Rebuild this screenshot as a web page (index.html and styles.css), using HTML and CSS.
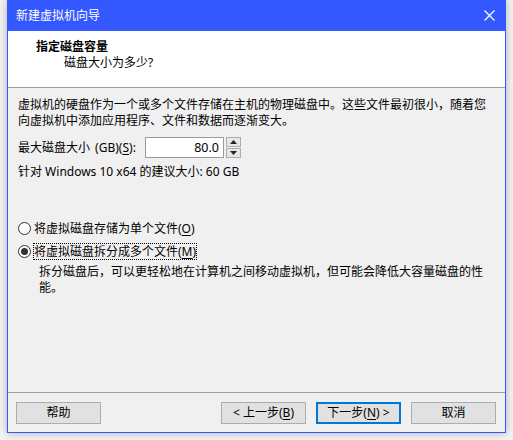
FILE: index.html
```html
<!DOCTYPE html>
<html lang="zh">
<head>
<meta charset="utf-8">
<title>新建虚拟机向导</title>
<link rel="stylesheet" href="styles.css">
</head>
<body>
<div class="window">
  <div class="titlebar">
    <span class="title">新建虚拟机向导</span>
    <svg class="close" width="11" height="11" viewBox="0 0 11 11"><path d="M0.5 0.5 L10.5 10.5 M10.5 0.5 L0.5 10.5" stroke="#fff" stroke-width="1.2" fill="none"/></svg>
  </div>
  <div class="header">
    <div class="h-title">指定磁盘容量</div>
    <div class="h-sub">磁盘大小为多少?</div>
  </div>
  <div class="content">
    <p class="para">虚拟机的硬盘作为一个或多个文件存储在主机的物理磁盘中。这些文件最初很小，随着您向虚拟机中添加应用程序、文件和数据而逐渐变大。</p>
    <div class="size-row">
      <span class="lbl">最大磁盘大小 (GB)(<u>S</u>):</span>
      <div class="spin">
        <div class="spin-input">80.0</div>
        <div class="spin-btns">
          <div class="sb"><svg width="7" height="4" viewBox="0 0 7 4"><path d="M3.5 0 L7 4 L0 4 Z" fill="#222"/></svg></div>
          <div class="sb"><svg width="7" height="4" viewBox="0 0 7 4"><path d="M0 0 L7 0 L3.5 4 Z" fill="#222"/></svg></div>
        </div>
      </div>
    </div>
    <div class="rec">针对 Windows 10 x64 的建议大小: 60 GB</div>
    <div class="radios">
      <div class="radio-row"><span class="radio"></span><span class="rlabel">将虚拟磁盘存储为单个文件(<u>O</u>)</span></div>
      <div class="radio-row"><span class="radio on"></span><span class="rlabel focus">将虚拟磁盘拆分成多个文件(<u>M</u>)</span></div>
      <p class="desc">拆分磁盘后，可以更轻松地在计算机之间移动虚拟机，但可能会降低大容量磁盘的性能。</p>
    </div>
  </div>
  <div class="footer">
    <button class="btn">帮助</button>
    <div class="spacer"></div>
    <button class="btn">&lt; 上一步(<u>B</u>)</button>
    <button class="btn primary">下一步(<u>N</u>) &gt;</button>
    <button class="btn">取消</button>
  </div>
</div>
</body>
</html>
```
FILE: styles.css
```css
html, body {
  margin: 0;
  padding: 0;
}
body {
  background: #f3f3f3;
  width: 513px;
  height: 440px;
  overflow: hidden;
  font-family: "Noto Sans", "Noto Sans CJK SC", sans-serif;
  font-size: 12px;
  color: #000;
}
.window {
  margin-left: 7px;
  width: 497px;
  height: 432px;
  border: 1px solid #3358ff;
  border-top: none;
  background: #f0f0f0;
  box-shadow: 0 0 8px rgba(0,0,0,0.28);
  display: flex;
  flex-direction: column;
}
.titlebar {
  height: 31px;
  background: #3358ff;
  color: #fff;
  display: flex;
  align-items: center;
  padding-left: 8px;
  padding-right: 10px;
  margin: 0 -1px;
}
.title {
  flex: 1;
  font-size: 12px;
  line-height: 16px;
  margin-left: 1px;
}
.close {
  display: block;
  margin-right: 1px;
}
.header {
  background: #fff;
  border-bottom: 1px solid #a0a0a0;
  box-sizing: border-box;
  height: 57px;
  padding-top: 8px;
  padding-left: 28px;
}
.h-title {
  font-weight: bold;
  line-height: 16px;
  font-size: 12px;
}
.h-sub {
  line-height: 16px;
  padding-left: 28px;
}
.content {
  flex: 1;
  padding: 9px 12px 0 10px;
}
.para {
  margin: 0;
  line-height: 16px;
}
.size-row {
  margin-top: 8px;
  display: flex;
  align-items: center;
  height: 21px;
}
.lbl {
  line-height: 16px;
  width: 127px;
  word-spacing: 2px;
}
.spin {
  display: flex;
  height: 21px;
}
.spin-input {
  width: 79px;
  height: 21px;
  box-sizing: border-box;
  border: 1px solid #9a9a9a;
  background: #fff;
  text-align: right;
  padding-right: 4px;
  line-height: 19px;
  font-size: 12.5px;
}
.spin-btns {
  margin-left: 2px;
  width: 15px;
  display: flex;
  flex-direction: column;
  gap: 1px;
}
.sb {
  flex: 1;
  border: 1px solid #adadad;
  background: #e6e6e6;
  display: flex;
  align-items: center;
  justify-content: center;
}
.sb svg { display: block; }
.rec {
  margin-top: 6px;
  line-height: 16px;
}
.radios {
  margin-top: 40px;
}
.radio-row {
  display: flex;
  align-items: center;
  height: 16px;
  margin-bottom: 7px;
}
.radio {
  width: 13px;
  height: 13px;
  box-sizing: border-box;
  border: 1px solid #333;
  border-radius: 50%;
  background: #fff;
  margin-right: 2px;
  display: flex;
  align-items: center;
  justify-content: center;
}
.radio.on::after {
  content: "";
  width: 7px;
  height: 7px;
  border-radius: 50%;
  background: #333;
}
.rlabel {
  line-height: 15px;
  border: 1px dotted transparent;
}
.rlabel.focus {
  border-color: #000;
}
.desc {
  margin: -2px 0 0 21px;
  line-height: 16px;
}
.footer {
  height: 40px;
  border-top: 1px solid #a0a0a0;
  box-sizing: border-box;
  display: flex;
  align-items: flex-start;
  padding: 9px 9px 0 8px;
  gap: 10px;
}
.spacer {
  flex: 1;
}
.btn {
  width: 85px;
  height: 22px;
  box-sizing: border-box;
  border: 1px solid #adadad;
  background: #e1e1e1;
  font-family: "Noto Sans", "Noto Sans CJK SC", sans-serif;
  font-size: 12px;
  line-height: 16px;
  padding: 0;
  color: #000;
}
.btn.primary {
  border: 2px solid #0078d7;
}
u {
  text-underline-offset: 2px;
}
```
